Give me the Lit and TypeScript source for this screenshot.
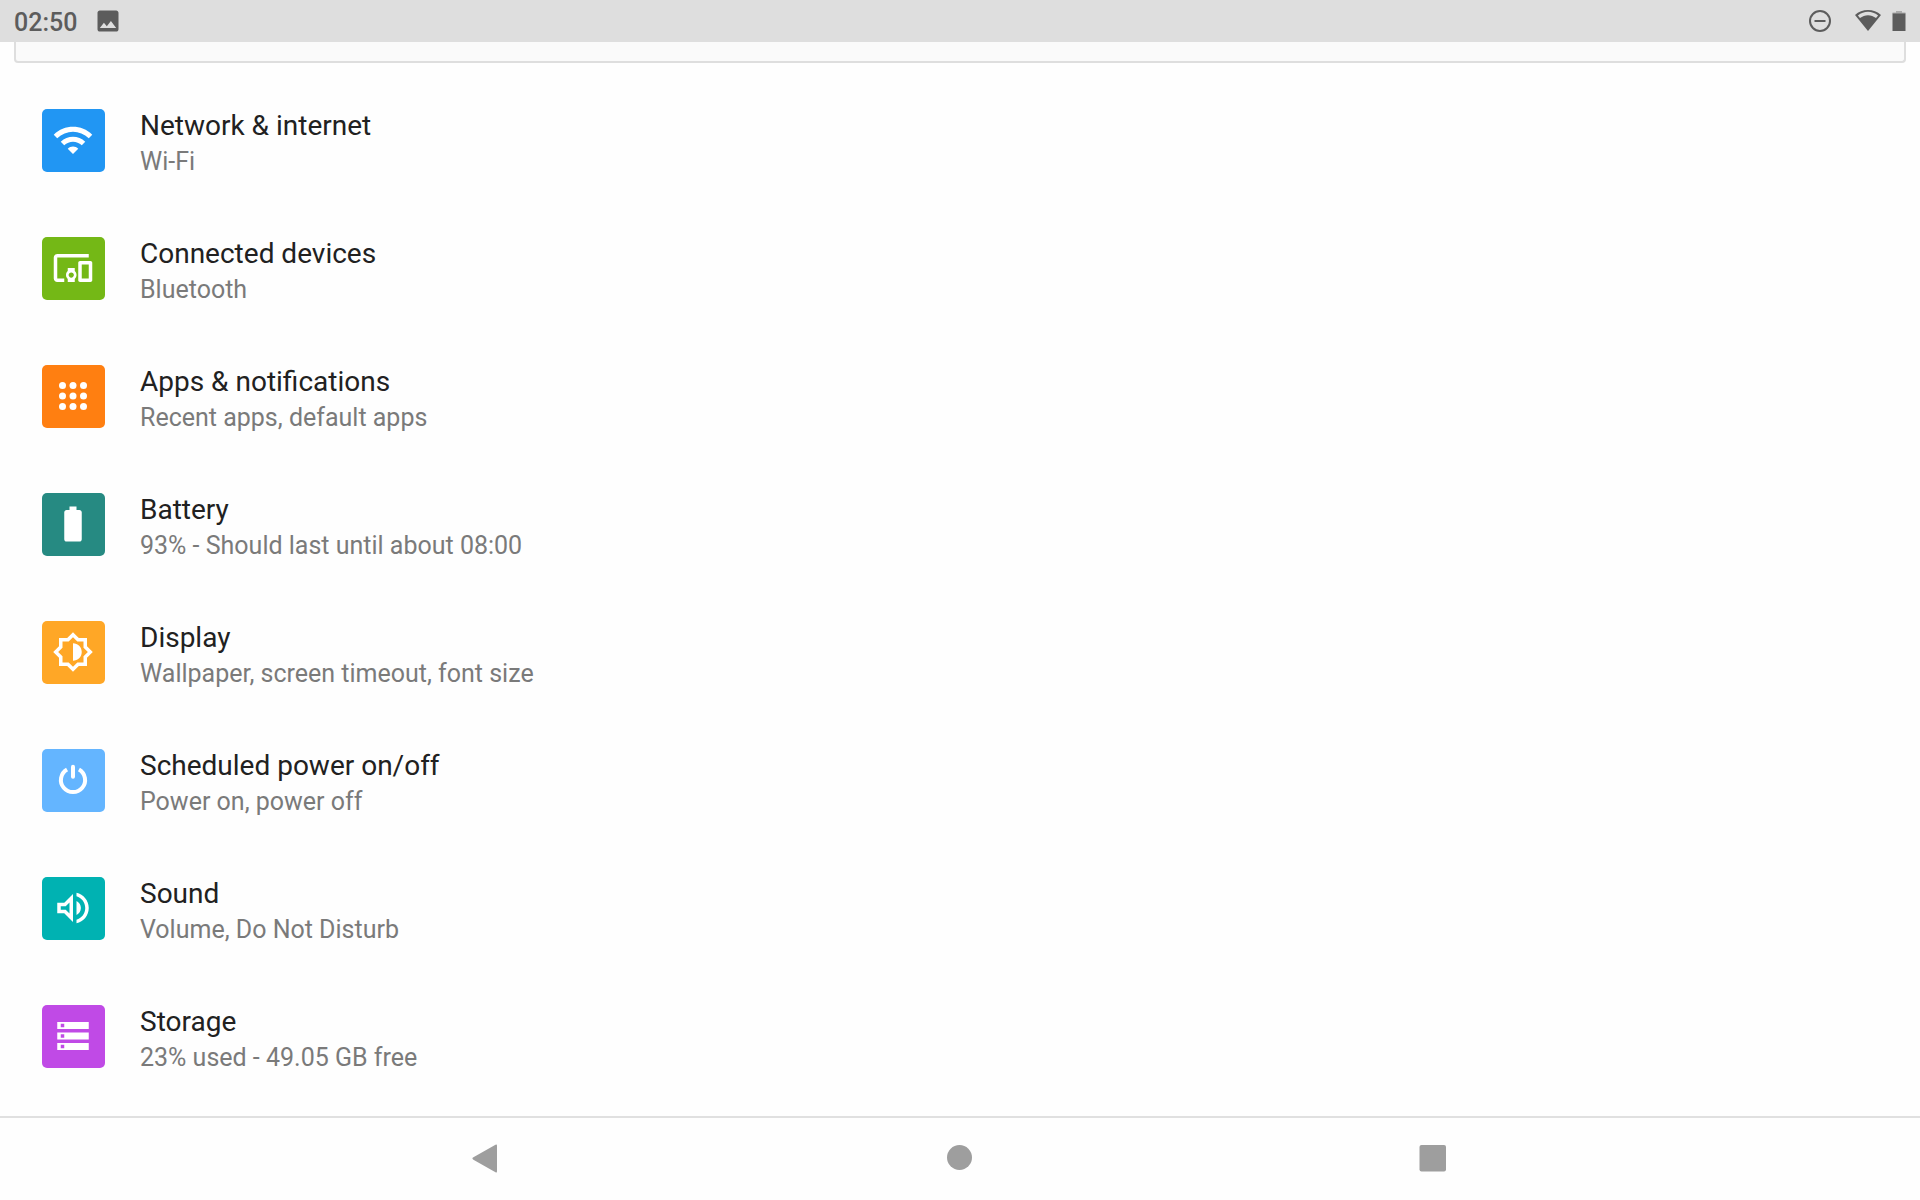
import { LitElement, css, html, svg, SVGTemplateResult } from "lit";
import { customElement, property } from "lit/decorators.js";
import { styleMap } from "lit/directives/style-map.js";

interface Setting {
  title: string;
  summary: string;
  color: string;
  icon: SVGTemplateResult;
}

const settings: Setting[] = [
  {
    title: "Network & internet",
    summary: "Wi-Fi",
    color: "#2196f3",
    icon: svg`<path d="M1 9l2 2c4.97-4.97 13.03-4.97 18 0l2-2C16.93 2.93 7.08 2.93 1 9zm8 8l3 3 3-3c-1.65-1.66-4.34-1.66-6 0zm-4-4l2 2c2.76-2.76 7.24-2.76 10 0l2-2C15.14 9.14 8.87 9.14 5 13z"/>`,
  },
  {
    title: "Connected devices",
    summary: "Bluetooth",
    color: "#74b816",
    icon: svg`<path d="M3 6h18V4H3c-1.1 0-2 .9-2 2v12c0 1.1.9 2 2 2h4v-2H3V6zm10 6H9v1.78c-.61.55-1 1.33-1 2.22s.39 1.67 1 2.22V20h4v-1.78c.61-.55 1-1.34 1-2.22s-.39-1.67-1-2.22V12zm-2 5.5c-.83 0-1.5-.67-1.5-1.5s.67-1.5 1.5-1.5 1.5.67 1.5 1.5-.67 1.5-1.5 1.5zM22 8h-6c-.5 0-1 .5-1 1v10c0 .5.5 1 1 1h6c.5 0 1-.5 1-1V9c0-.5-.5-1-1-1zm-1 10h-4v-8h4v8z"/>`,
  },
  {
    title: "Apps & notifications",
    summary: "Recent apps, default apps",
    color: "#ff7f11",
    icon: svg`${[6, 12, 18].map((y) => [6, 12, 18].map((x) => svg`<circle cx=${x} cy=${y} r="2"/>`))}`,
  },
  {
    title: "Battery",
    summary: "93% - Should last until about 08:00",
    color: "#268a82",
    icon: svg`<path d="M15.67 4H14V2h-4v2H8.33C7.6 4 7 4.6 7 5.33v15.33C7 21.4 7.6 22 8.33 22h7.33c.74 0 1.34-.6 1.34-1.33V5.33C17 4.6 16.4 4 15.67 4z"/>`,
  },
  {
    title: "Display",
    summary: "Wallpaper, screen timeout, font size",
    color: "#ffa726",
    icon: svg`<path d="M20 8.69V4h-4.69L12 .69 8.69 4H4v4.69L.69 12 4 15.31V20h4.69L12 23.31 15.31 20H20v-4.69L23.31 12 20 8.69zm-2 5.79V18h-3.52L12 20.48 9.52 18H6v-3.52L3.52 12 6 9.52V6h3.52L12 3.52 14.48 6H18v3.52L20.48 12 18 14.48zM12 7v10c2.76 0 5-2.24 5-5s-2.24-5-5-5z"/>`,
  },
  {
    title: "Scheduled power on/off",
    summary: "Power on, power off",
    color: "#64b5ff",
    icon: svg`<g fill="none" stroke="#fff" stroke-width="2.3"><path d="M8.6 6A6.9 6.9 0 1 0 15.4 6"/><path d="M12 4.5V10.100" stroke-linecap="round"/></g>`,
  },
  {
    title: "Sound",
    summary: "Volume, Do Not Disturb",
    color: "#00b2b2",
    icon: svg`<path d="M3 9v6h4l5 5V4L7 9H3zm7-.17v6.34L7.83 13H5v-2h2.83L10 8.83zM16.5 12c0-1.77-1.02-3.29-2.5-4.03v8.05c1.48-.73 2.5-2.25 2.5-4.02zM14 3.23v2.06c2.89.86 5 3.54 5 6.71s-2.11 5.85-5 6.71v2.06c4.01-.91 7-4.49 7-8.77s-2.99-7.86-7-8.77z"/>`,
  },
  {
    title: "Storage",
    summary: "23% used - 49.05 GB free",
    color: "#c04ae6",
    icon: svg`<path fill-rule="evenodd" d="M3 4h18v4H3zM5 5v2h2V5zM3 10h18v4H3zM5 11v2h2v-2zM3 16h18v4H3zM5 17v2h2v-2z"/>`,
  },
];

@customElement("status-bar")
export class StatusBar extends LitElement {
  static styles = css`
    :host {
      display: flex;
      align-items: center;
      justify-content: space-between;
      height: 42px;
      padding: 0 14px;
      background: #dedede;
      color: #5c5c5c;
      font: 500 25px/28px Roboto, sans-serif;
    }
    .group {
      display: flex;
      align-items: center;
    }
    .notice {
      gap: 17px;
    }
    .time {
      padding-top: 4px;
    }
    svg {
      display: block;
      fill: currentColor;
    }
    .wifi {
      margin: 0 11px 0 23px;
    }
  `;

  render() {
    return html`
      <div class="group notice">
        <time class="time">02:50</time>
        <svg width="28" height="28" viewBox="0 0 24 24" aria-hidden="true">
          <path d="M21 19V5c0-1.1-.9-2-2-2H5c-1.1 0-2 .9-2 2v14c0 1.1.9 2 2 2h14c1.1 0 2-.9 2-2zM8.5 13.5l2.5 3.01L14.5 12l4.5 6H5l3.5-4.5z"/>
        </svg>
      </div>
      <div class="group">
        <svg width="24" height="24" viewBox="0 0 24 24" aria-hidden="true">
          <circle cx="12" cy="12" r="10" fill="none" stroke="currentColor" stroke-width="2"/>
          <path d="M6.5 11h11v2h-11z"/>
        </svg>
        <svg class="wifi" width="26" height="24" viewBox="0 0 26 24" aria-hidden="true">
          <path fill-rule="evenodd" d="M0 6C7-.8 19-.8 26 6L13 22zM2.9 6.4L5 9.1C9.7 5.2 16.3 5.2 21 9.1l2.1-2.7C17 1.5 9 1.5 2.9 6.4z"/>
        </svg>
        <svg width="14" height="24" viewBox="0 0 14 24" aria-hidden="true">
          <path opacity=".4" d="M4 2h6v1.5h3.500V5H.5V3.500H4z"/>
          <path d="M.5 4.500h13V22H.5z"/>
        </svg>
      </div>
    `;
  }
}

@customElement("setting-row")
export class SettingRow extends LitElement {
  @property({ attribute: false }) setting!: Setting;

  static styles = css`
    :host {
      display: block;
    }
    .row {
      display: flex;
      align-items: flex-start;
      gap: 35px;
      min-height: 128px;
      box-sizing: border-box;
      padding: 32px 42px 24px;
      color: inherit;
      text-decoration: none;
    }
    .tile {
      flex: none;
      box-sizing: border-box;
      width: 63px;
      height: 63px;
      padding: 10px;
      border-radius: 5px;
    }
    .glyph {
      display: block;
      width: 42px;
      height: 42px;
      fill: #fff;
    }
    .text {
      display: flex;
      flex-direction: column;
      gap: 5px;
    }
    .title {
      color: #212121;
      font-size: 28px;
      line-height: 33px;
    }
    .summary {
      color: #7a7a7a;
      font-size: 25px;
      line-height: 30px;
    }
  `;

  render() {
    const { title, summary, color, icon } = this.setting;
    return html`
      <a class="row" href="#">
        <span class="tile" style=${styleMap({ background: color })}>
          <svg class="glyph" viewBox="0 0 24 24" aria-hidden="true">${icon}</svg>
        </span>
        <span class="text">
          <span class="title">${title}</span>
          <span class="summary">${summary}</span>
        </span>
      </a>
    `;
  }
}

@customElement("app-root")
export class AppRoot extends LitElement {
  static styles = css`
    :host {
      display: flex;
      flex-direction: column;
      min-height: 100vh;
      background: #fefefe;
      font-family: Roboto, sans-serif;
    }
    .search {
      height: 19px;
      margin: 0 14px 14px;
      border: 2px solid #dedede;
      border-top: 0;
      border-radius: 0 0 4px 4px;
      background: #fafafa;
    }
    .list {
      flex: 1;
    }
    .nav {
      display: flex;
      height: 82px;
      padding: 0 13%;
      border-top: 2px solid #e0e0e0;
    }
    .key {
      display: grid;
      place-items: center;
      flex: 1;
      padding: 0;
      border: 0;
      background: none;
      color: #9e9e9e;
    }
    .key svg {
      fill: currentColor;
    }
  `;

  render() {
    return html`
      <status-bar></status-bar>
      <div class="search"></div>
      <main class="list">
        ${settings.map((s) => html`<setting-row .setting=${s}></setting-row>`)}
      </main>
      <nav class="nav">
        <button class="key" aria-label="Back">
          <svg width="30" height="30" viewBox="0 0 30 30">
            <path d="M26 1.700V27.300Q26 29.100 24.500 28.200L2.400 15.700Q.4 14.500 2.400 13.300L24.500.8Q26 0 26 1.700z"/>
          </svg>
        </button>
        <button class="key" aria-label="Home">
          <svg width="30" height="30" viewBox="0 0 30 30"><circle cx="14.500" cy="13.500" r="12.500"/></svg>
        </button>
        <button class="key" aria-label="Recent apps">
          <svg width="30" height="30" viewBox="0 0 30 30"><rect x="0.500" y="1" width="26.500" height="26.500" rx="2"/></svg>
        </button>
      </nav>
    `;
  }
}
